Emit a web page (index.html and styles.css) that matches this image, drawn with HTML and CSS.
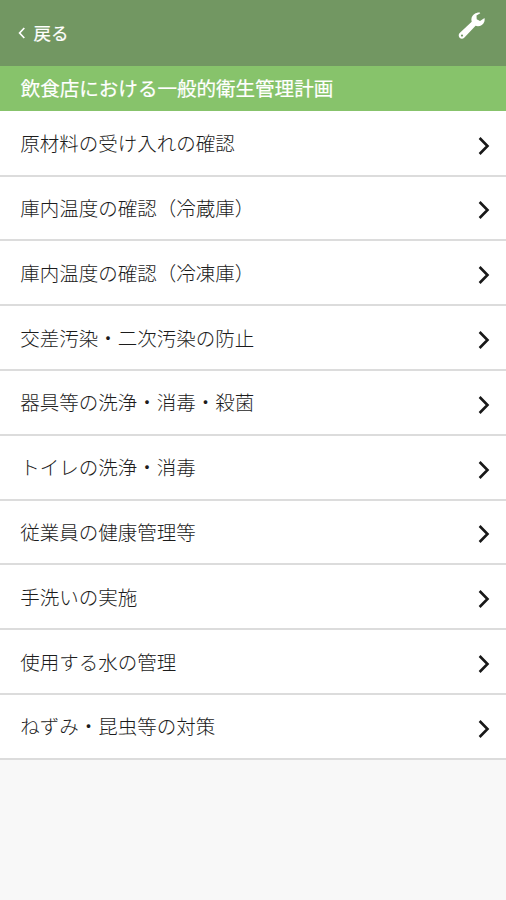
FILE: index.html
```html
<!DOCTYPE html>
<html lang="ja">
<head>
<meta charset="utf-8">
<title>飲食店における一般的衛生管理計画</title>
<link rel="stylesheet" href="styles.css">
</head>
<body>
<svg width="0" height="0" class="defs"><symbol id="chevron" viewBox="0 0 12 20"><path d="M1.6 2 9.5 10 1.6 18"/></symbol></svg>
<header class="bar">
  <a class="back"><svg class="back-icon" viewBox="0 0 8 12"><path d="M6.3 1 1.6 6l4.7 5"/></svg><span>戻る</span></a>
  <svg class="wrench" viewBox="0 0 28 28"><path fill-rule="evenodd" d="M21.7.6C18.300.3 14.500 2.600 13.600 5.800C13.200 7.100 13.300 8.400 13.700 9.700L1.700 21.100C.4 22.400.4 24.400 1.600 25.700C2.900 27 4.900 27 6.200 25.700L17.600 13.800C21.200 15.200 25.300 12.900 26.400 9.400C26.800 8.200 26.700 7.100 26.500 6L22 8.900L18.700 7.200L18.500 3.400L22.300 1.200ZM4 22.500a1.100 1.100 0 1 1 0 2.200a1.100 1.100 0 1 1 0-2.200Z"/></svg>
</header>
<h1 class="title">飲食店における一般的衛生管理計画</h1>
<ul class="list">
  <li class="row"><span>原材料の受け入れの確認</span><svg class="chevron"><use href="#chevron"/></svg></li>
  <li class="row"><span>庫内温度の確認（冷蔵庫）</span><svg class="chevron"><use href="#chevron"/></svg></li>
  <li class="row"><span>庫内温度の確認（冷凍庫）</span><svg class="chevron"><use href="#chevron"/></svg></li>
  <li class="row"><span>交差汚染・二次汚染の防止</span><svg class="chevron"><use href="#chevron"/></svg></li>
  <li class="row"><span>器具等の洗浄・消毒・殺菌</span><svg class="chevron"><use href="#chevron"/></svg></li>
  <li class="row"><span>トイレの洗浄・消毒</span><svg class="chevron"><use href="#chevron"/></svg></li>
  <li class="row"><span>従業員の健康管理等</span><svg class="chevron"><use href="#chevron"/></svg></li>
  <li class="row"><span>手洗いの実施</span><svg class="chevron"><use href="#chevron"/></svg></li>
  <li class="row"><span>使用する水の管理</span><svg class="chevron"><use href="#chevron"/></svg></li>
  <li class="row"><span>ねずみ・昆虫等の対策</span><svg class="chevron"><use href="#chevron"/></svg></li>
</ul>
</body>
</html>
```
FILE: styles.css
```css
* { box-sizing: border-box; }
body {
  margin: 0;
  min-height: 100vh;
  background: #f8f8f8;
  color: #1c1c1c;
  font-family: "Noto Sans CJK JP", sans-serif;
  font-size: 19.5px;
  line-height: 28px;
}
.defs { display: block; }
.bar {
  display: flex;
  justify-content: space-between;
  align-items: flex-start;
  height: 66px;
  padding: 12px 20px 0 17.5px;
  background: #729762;
  color: #fff;
}
.back {
  display: flex;
  align-items: center;
  gap: 8px;
  height: 42px;
  font-size: 17.5px;
  -webkit-text-stroke: .2px #fff;
}
.back-icon {
  width: 8px;
  height: 12px;
  fill: none;
  stroke: #fff;
  stroke-width: 1.7;
}
.wrench { width: 28px; height: 28px; fill: #fff; }
.title {
  margin: 0;
  height: 45px;
  padding: 8px 20px 0 20.7px;
  background: #87c36b;
  color: #fff;
  font-size: 19.55px;
  font-weight: 400;
  -webkit-text-stroke: .2px #fff;
}
.list { margin: 0; padding: .8px 0 0; list-style: none; background: #fff; }
.row {
  display: flex;
  justify-content: space-between;
  align-items: center;
  height: 64.8px;
  padding: 0 16px 0 20.3px;
  font-weight: 300;
  background: #fff;
  border-bottom: 2px solid #dcdcdc;
}
.chevron {
  width: 12px;
  height: 20px;
  margin-top: 5px;
  fill: none;
  stroke: #181818;
  stroke-width: 2.6;
}
```
